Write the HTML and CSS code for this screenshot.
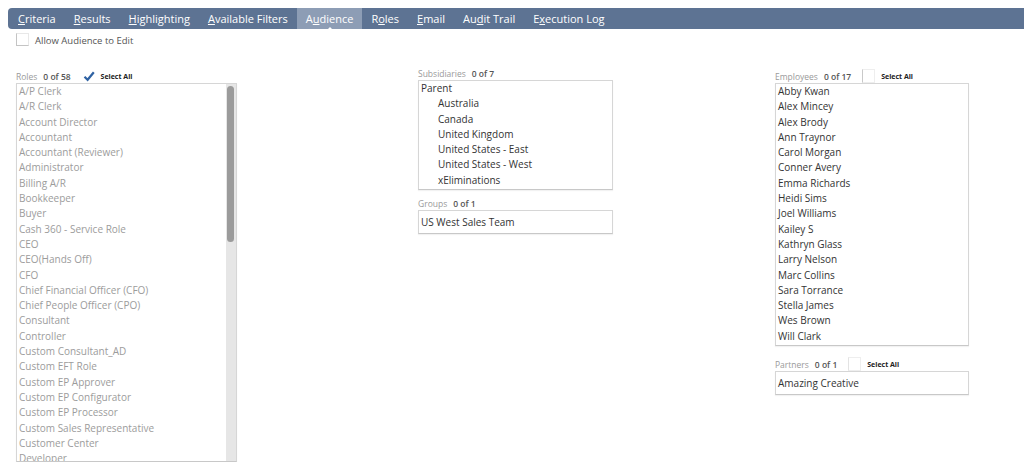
FILE: index.html
```html
<!DOCTYPE html>
<html>
<head>
    <title>Saved Search - Audience</title>
    <link rel="stylesheet" href="styles.css">
</head>
<body>
    <div class="tabbar">
        <span class="tab"><u>C</u>riteria</span>
        <span class="tab"><u>R</u>esults</span>
        <span class="tab"><u>H</u>ighlighting</span>
        <span class="tab"><u>A</u>vailable Filters</span>
        <span class="tab active">A<u>u</u>dience</span>
        <span class="tab">R<u>o</u>les</span>
        <span class="tab"><u>E</u>mail</span>
        <span class="tab">Au<u>d</u>it Trail</span>
        <span class="tab">E<u>x</u>ecution Log</span>
    </div>

    <div class="allow-row">
        <span class="box-check"></span>
        <span class="allow-label">Allow Audience to Edit</span>
    </div>

    <div class="columns">
        <!-- Roles -->
        <div class="col col-roles">
            <div class="field-label">
                <span class="name">Roles</span>
                <span class="count">0 of 58</span>
                <svg class="tick" width="12" height="11" viewBox="0 0 12 11">
                    <path d="M1.5 5.8 L4.6 8.8 L10.8 1.2" fill="none" stroke="#2f62a3" stroke-width="2.2"/>
                </svg>
                <span class="select-all">Select All</span>
            </div>
            <div class="listbox roles-box">
                <div class="items muted">
                    <div>A/P Clerk</div>
                    <div>A/R Clerk</div>
                    <div>Account Director</div>
                    <div>Accountant</div>
                    <div>Accountant (Reviewer)</div>
                    <div>Administrator</div>
                    <div>Billing A/R</div>
                    <div>Bookkeeper</div>
                    <div>Buyer</div>
                    <div>Cash 360 - Service Role</div>
                    <div>CEO</div>
                    <div>CEO(Hands Off)</div>
                    <div>CFO</div>
                    <div>Chief Financial Officer (CFO)</div>
                    <div>Chief People Officer (CPO)</div>
                    <div>Consultant</div>
                    <div>Controller</div>
                    <div>Custom Consultant_AD</div>
                    <div>Custom EFT Role</div>
                    <div>Custom EP Approver</div>
                    <div>Custom EP Configurator</div>
                    <div>Custom EP Processor</div>
                    <div>Custom Sales Representative</div>
                    <div>Customer Center</div>
                    <div>Developer</div>
                </div>
                <div class="scrollbar"><div class="thumb"></div></div>
            </div>
        </div>

        <!-- Subsidiaries / Groups -->
        <div class="col col-subs">
            <div class="field-label">
                <span class="name">Subsidiaries</span>
                <span class="count">0 of 7</span>
            </div>
            <div class="listbox">
                <div class="items">
                    <div>Parent</div>
                    <div class="indent">Australia</div>
                    <div class="indent">Canada</div>
                    <div class="indent">United Kingdom</div>
                    <div class="indent">United States - East</div>
                    <div class="indent">United States - West</div>
                    <div class="indent">xEliminations</div>
                </div>
            </div>

            <div class="field-label spaced">
                <span class="name">Groups</span>
                <span class="count">0 of 1</span>
            </div>
            <div class="listbox single">
                <div class="items">
                    <div>US West Sales Team</div>
                </div>
            </div>
        </div>

        <!-- Employees / Partners -->
        <div class="col col-emps">
            <div class="field-label">
                <span class="name">Employees</span>
                <span class="count">0 of 17</span>
                <span class="small-check"></span>
                <span class="select-all">Select All</span>
            </div>
            <div class="listbox">
                <div class="items">
                    <div>Abby Kwan</div>
                    <div>Alex Mincey</div>
                    <div>Alex Brody</div>
                    <div>Ann Traynor</div>
                    <div>Carol Morgan</div>
                    <div>Conner Avery</div>
                    <div>Emma Richards</div>
                    <div>Heidi Sims</div>
                    <div>Joel Williams</div>
                    <div>Kailey S</div>
                    <div>Kathryn Glass</div>
                    <div>Larry Nelson</div>
                    <div>Marc Collins</div>
                    <div>Sara Torrance</div>
                    <div>Stella James</div>
                    <div>Wes Brown</div>
                    <div>Will Clark</div>
                </div>
            </div>

            <div class="field-label spaced-lg">
                <span class="name">Partners</span>
                <span class="count">0 of 1</span>
                <span class="small-check faint"></span>
                <span class="select-all">Select All</span>
            </div>
            <div class="listbox single">
                <div class="items">
                    <div>Amazing Creative</div>
                </div>
            </div>
        </div>
    </div>
</body>
</html>
```

FILE: styles.css
```css
/* saved search audience tab */
body {
    margin: 0;
    font-family: "Open Sans", Arial, sans-serif;
    background-color: #fff;
    color: #333;
    overflow: hidden;
}

.tabbar {
    display: flex;
    align-items: stretch;
    height: 21px;
    margin: 8px 0 0 8px;
    padding-left: 1px;
    background-color: #5d7393;
    border-radius: 4px 0 0 4px;
}

.tab {
    display: flex;
    align-items: center;
    padding: 0 9px;
    font-size: 11px;
    color: #fff;
    white-space: nowrap;
}

.tab u {
    text-underline-offset: 1px;
}

.tab.active {
    position: relative;
    background-color: #8d9db5;
}

.tab.active::after {
    content: "";
    position: absolute;
    left: 50%;
    bottom: -1px;
    margin-left: -3px;
    border-left: 3px solid transparent;
    border-right: 3px solid transparent;
    border-bottom: 3px solid #fff;
}

.allow-row {
    display: flex;
    align-items: center;
    height: 14px;
    margin: 4px 0 0 16px;
}

.box-check {
    width: 11px;
    height: 11px;
    margin-top: -2px;
    border: 1px solid #e8e8e8;
    border-left-color: #c4c4c4;
    border-bottom-color: #c4c4c4;
}

.allow-label {
    margin-left: 6px;
    font-size: 9.5px;
    color: #555;
}

.columns {
    display: flex;
    align-items: flex-start;
    padding: 19px 0 0 16px;
}

.col-roles {
    width: 221px;
    margin-top: 3px;
}

.col-subs {
    width: 195px;
    margin-left: 181px;
}

.col-emps {
    width: 194px;
    margin-left: 162px;
    margin-top: 3px;
}

.field-label {
    display: flex;
    align-items: center;
    height: 14px;
    font-size: 8.5px;
}

.field-label .name {
    color: #9a9a9a;
}

.field-label .count {
    margin-left: 6px;
    color: #555;
    font-weight: 600;
}

.field-label.spaced {
    margin-top: 6px;
}

.field-label.spaced-lg {
    margin-top: 11px;
}

.tick {
    margin-left: 12px;
}

.select-all {
    margin-left: 6px;
    font-size: 7px;
    font-weight: 700;
    color: #222;
}

.small-check {
    width: 11px;
    height: 12px;
    margin-left: 11px;
    border: 1px solid #eee;
    border-left-color: #c9c9c9;
}

.small-check.faint {
    border-left-color: #e3e3e3;
}

.listbox {
    display: flex;
    border: 1px solid #d6d6d6;
    border-bottom-color: #c8c8c8;
    box-shadow: 0 1px 1px rgba(0, 0, 0, 0.05);
    background-color: #fff;
}

.items {
    flex: 1;
    padding: 0 2px 1px 2px;
    font-size: 10px;
    line-height: 15.3px;
    color: #333;
    overflow: hidden;
}

.items.muted {
    color: #9c9c9c;
}

.indent {
    padding-left: 17px;
}

.single .items {
    padding-top: 4px;
    padding-bottom: 3px;
}

.roles-box {
    height: 377px;
}

.scrollbar {
    width: 10px;
    background-color: #e6e6e6;
}

.thumb {
    height: 156px;
    margin: 2px 2px 0 1px;
    background-color: #9b9b9b;
    border-radius: 4px;
}
```
